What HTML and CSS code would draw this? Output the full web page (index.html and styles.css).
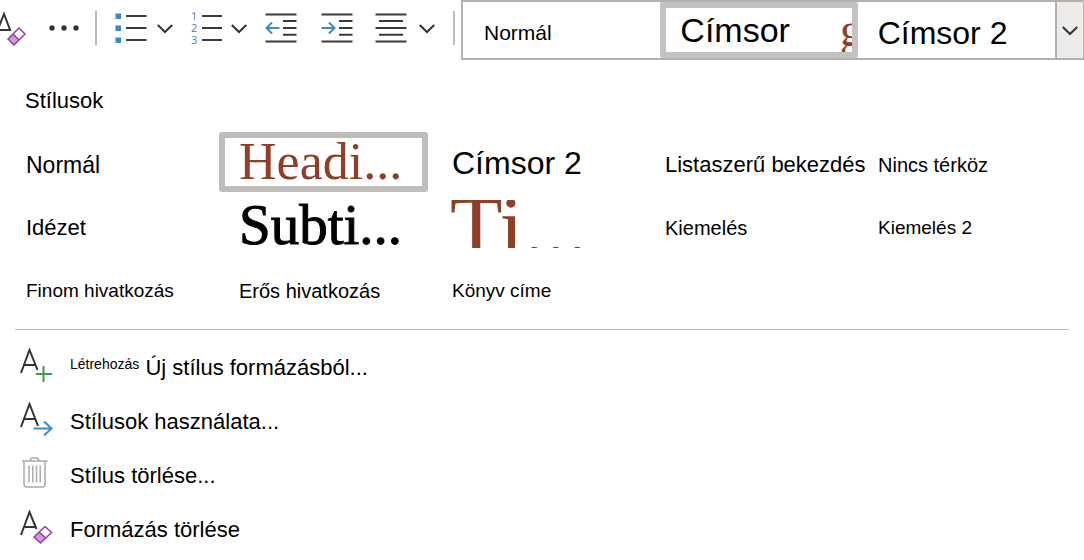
FILE: index.html
```html
<!DOCTYPE html>
<html lang="hu">
<head>
<meta charset="utf-8">
<title>Stílusok</title>
<link rel="stylesheet" href="styles.css">
</head>
<body>
<header class="toolbar">
  <div class="tools">
    <button class="tool clear" aria-label="Formázás törlése">
      <svg width="26" height="36" viewBox="0 0 26 36"><path class="ink" d="M-4 24 4 4l6.500 17M-2 20H10"/><path class="eraser-fill" d="M8 29l5-5 6 6-5 5z"/><path class="eraser" d="M8 29 19 18l6 6-11 11zM13 24l6 6"/></svg>
    </button>
    <button class="tool more" aria-label="Továbbiak">
      <svg width="32" height="36" viewBox="0 0 32 36"><g fill="#333"><circle cx="4" cy="18" r="2.7"/><circle cx="16" cy="18" r="2.7"/><circle cx="28" cy="18" r="2.7"/></g></svg>
    </button>
    <span class="separator"></span>
    <div class="split bullets">
      <button class="tool" aria-label="Felsorolás">
        <svg width="33" height="36" viewBox="0 0 33 36"><path fill="#3d88ca" d="M.5 3.500h5.500V9H.5zM.5 15.500h5.500V21H.5zM.5 27.500h5.500V33H.5z"/><path class="line" d="M11 6h20.500M11 18h20.500M11 30h20.500"/></svg>
      </button>
      <button class="tool" aria-label="Felsorolás beállításai">
        <svg width="16" height="36" viewBox="0 0 16 36"><path class="ink" d="m.8 15 7.200 7 7.200-7"/></svg>
      </button>
    </div>
    <div class="split numbers">
      <button class="tool" aria-label="Számozás">
        <svg width="31" height="36" viewBox="0 0 31 36"><g class="digits"><text x="0" y="10">1</text><text x="0" y="22">2</text><text x="0" y="34">3</text></g><path class="line" d="M11 6h20M11 18h20M11 30h20"/></svg>
      </button>
      <button class="tool" aria-label="Számozás beállításai">
        <svg width="16" height="36" viewBox="0 0 16 36"><path class="ink" d="m.8 15 7.200 7 7.200-7"/></svg>
      </button>
    </div>
    <button class="tool outdent" aria-label="Behúzás csökkentése">
      <svg width="32" height="36" viewBox="0 0 32 36"><path class="line" d="M.5 4.500h31M18 11h13.500M18 18h13.500M18 24.700h13.500M.5 31.500h31"/><path class="arrow" d="M14.500 18H1.500M7 12.500 1.500 18 7 23.500"/></svg>
    </button>
    <button class="tool indent" aria-label="Behúzás növelése">
      <svg width="32" height="36" viewBox="0 0 32 36"><path class="line" d="M.5 4.500h31M18 11h13.500M18 18h13.500M18 24.700h13.500M.5 31.500h31"/><path class="arrow" d="M.5 18h13M8 12.500l5.500 5.500L8 23.500"/></svg>
    </button>
    <div class="split align">
      <button class="tool" aria-label="Igazítás">
        <svg width="35" height="36" viewBox="0 0 35 36"><path class="line" d="M.5 4.500h31M4 11h24M.5 18h31M4 24.700h24M.5 31.500h31"/></svg>
      </button>
      <button class="tool" aria-label="Igazítás beállításai">
        <svg width="16" height="36" viewBox="0 0 16 36"><path class="ink" d="m.8 15 7.200 7 7.200-7"/></svg>
      </button>
    </div>
    <span class="separator"></span>
  </div>
  <div class="gallery">
    <button class="quick quick-normal">Normál</button>
    <button class="quick quick-selected"><span>Címsor</span><span class="preview">g</span></button>
    <button class="quick quick-heading">Címsor 2</button>
    <button class="expand" aria-label="Stílusok megjelenítése">
      <svg width="16" height="36" viewBox="0 0 16 36"><path class="ink" d="m.8 15 7.200 7 7.200-7"/></svg>
    </button>
  </div>
</header>
<main class="panel">
  <h1 class="title">Stílusok</h1>
  <div class="styles">
    <button class="style size-l">Normál</button>
    <button class="style selected heading">Headi...</button>
    <button class="style size-xl">Címsor 2</button>
    <button class="style size-m">Listaszerű bekezdés</button>
    <button class="style">Nincs térköz</button>
    <button class="style size-m">Idézet</button>
    <button class="style subtitle">Subti...</button>
    <button class="style display"><span class="clip">Ti...</span></button>
    <button class="style">Kiemelés</button>
    <button class="style size-s">Kiemelés 2</button>
    <button class="style size-s">Finom hivatkozás</button>
    <button class="style">Erős hivatkozás</button>
    <button class="style size-s">Könyv címe</button>
  </div>
  <div class="actions">
    <button class="action">
      <svg width="34" height="36" viewBox="0 0 34 36"><path class="ink" d="M2 25 10.500 2l8 20M5 17h11.500"/><path fill="none" stroke="#429b4b" stroke-width="2" d="M17 26h16M24.500 18v16"/></svg>
      <span><small>Létrehozás</small> Új stílus formázásból...</span>
    </button>
    <button class="action">
      <svg width="34" height="36" viewBox="0 0 34 36"><path class="ink" d="M2 25 10.500 2l8.500 22M5 17h11.500"/><path class="arrow" d="M14.500 26.500h18M25 19.500l7.500 7-7.500 7"/></svg>
      <span>Stílusok használata...</span>
    </button>
    <button class="action">
      <svg width="34" height="36" viewBox="0 0 34 36"><path fill="none" stroke="#aaa" stroke-width="1.500" d="M3 5h25.500M11.500 5V4q0-2 2-2h4q2 0 2 2v1M5 5v23q0 3 3 3h15q3 0 3-3V5M10 9.500v17M13.800 9.500v17M17.500 9.500v17M21.200 9.500v17"/></svg>
      <span>Stílus törlése...</span>
    </button>
    <button class="action">
      <svg width="34" height="36" viewBox="0 0 34 36"><path class="ink" d="M2 25 10.500 2l7 17M5 17h12"/><path class="eraser-fill" d="M15 27l5-5 7 6-5 5z"/><path class="eraser" d="M15 27 26 16.500l6.500 6L21.500 33zM20 22l6.500 6"/></svg>
      <span>Formázás törlése</span>
    </button>
  </div>
</main>
</body>
</html>
```
FILE: styles.css
```css
* { box-sizing: border-box; }
body {
  margin: 0;
  background: #fff;
  color: #000;
  font-family: "Liberation Sans", Arial, sans-serif;
}
button {
  margin: 0;
  padding: 0;
  border: 0;
  background: none;
  color: inherit;
  font: inherit;
  text-align: left;
  white-space: nowrap;
}
svg { display: block; flex: none; }
.ink { fill: none; stroke: #333; stroke-width: 2; }
.line { fill: none; stroke: #3b3b3b; stroke-width: 2; }
.arrow { fill: none; stroke: #3d8bcd; stroke-width: 2; }
.eraser { fill: none; stroke: #8f3fa0; stroke-width: 1.5; }
.eraser-fill { fill: #cf9bd8; }
.digits { fill: #3d88ca; font-family: "Open Sans", sans-serif; font-size: 11px; }

.toolbar { display: flex; height: 60px; }
.tools { display: flex; align-items: center; flex: none; padding: 0 6px 4px 0; }
.split { display: flex; gap: 9px; }
.separator { width: 2px; height: 34px; background: #bbb8b6; }
.clear { margin-right: 22px; }
.more { margin-right: 15px; }
.bullets, .numbers, .align { margin-right: 18px; }
.bullets { margin-left: 18px; }
.outdent { margin-right: 24px; }
.indent { margin-right: 22px; }

.gallery {
  display: grid;
  grid-template-columns: repeat(3, minmax(0, 1fr)) 28px;
  flex: 1;
  min-width: 0;
  border: 2px solid #b3b0ad;
  border-right-width: 1px;
}
.quick { display: flex; align-items: center; overflow: hidden; }
.quick-normal { padding: 6px 0 0 21px; font-size: 21px; }
.quick-selected {
  justify-content: space-between;
  padding-left: 14px;
  border: 6px solid #c4c2c0;
  border-radius: 2px;
  font-size: 34px;
  line-height: 40px;
}
.preview {
  width: 12px;
  overflow: hidden;
  color: #8f3e27;
  font-family: "Liberation Serif", serif;
  font-size: 48px;
  line-height: 44px;
}
.quick-heading { padding: 6px 0 0 20px; font-size: 32px; }
.expand {
  display: flex;
  align-items: center;
  justify-content: center;
  border-left: 2px solid #b3b0ad;
  background: #edebe9;
}

.title { margin: 0; padding: 28px 25px 0; font-size: 22px; font-weight: 400; line-height: 26px; }
.styles {
  display: grid;
  grid-template-columns: repeat(5, minmax(0, 1fr));
  grid-template-rows: 60px 54px 60px;
  gap: 6px 4px;
  padding: 18px 17px 0 6px;
}
.style { display: flex; align-items: center; padding: 6px 0 0 20px; font-size: 20px; }
.size-s { font-size: 19px; }
.size-m { font-size: 22px; }
.size-l { font-size: 23px; }
.size-xl { font-size: 32px; padding-top: 2px; }
.heading, .subtitle, .display { font-family: "Liberation Serif", serif; line-height: 48px; }
.heading { color: #8f3e27; font-size: 52px; }
.subtitle { font-size: 57px; padding-top: 0; -webkit-text-stroke: 1px #000; }
.display { color: #8f3e27; font-size: 86px; line-height: 54px; padding: 0 0 2px 18px; }
.clip { height: 48px; overflow: hidden; }
.selected { padding: 0 0 0 14px; border: 6px solid #c0bcb9; border-radius: 3px; }

.actions {
  display: flex;
  flex-direction: column;
  gap: 18px;
  margin: 11px 15px 0;
  padding: 18px 4px 0;
  border-top: 1px solid #bbb;
}
.action { display: flex; align-items: center; gap: 17px; font-size: 22px; line-height: 36px; }
.action span { padding-top: 4px; line-height: 32px; }
.action small { font-size: 14px; line-height: 14px; vertical-align: 6px; }
```
